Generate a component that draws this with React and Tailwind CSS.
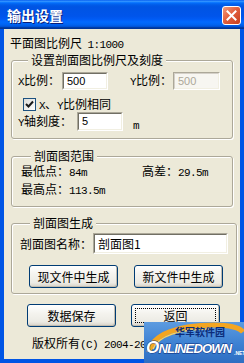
import React from 'react'

// latin runs in the old SimSun dialogs are half-width monospace
const L = ({ children }) => (
  <span className="font-['Liberation_Mono',monospace] text-[11px] tracking-[-0.6px]">{children}</span>
)

function Edit({ value, w, h, disabled }) {
  return (
    <div
      className={
        'border border-t-[#ACA899] border-l-[#ACA899] border-b-white border-r-white ' + w + ' ' + h
      }
    >
      <div
        className={
          'h-full border pl-[3px] flex items-center ' +
          (disabled
            ? 'bg-[#F7F6F1] border-t-[#D4D0C8] border-l-[#D4D0C8] border-b-[#F1EFE2] border-r-[#F1EFE2] text-[#ACA899]'
            : 'bg-white border-t-[#716F64] border-l-[#716F64] border-b-[#F1EFE2] border-r-[#F1EFE2] text-black')
        }
      >
        {value}
      </div>
    </div>
  )
}

function Btn({ children, focus }) {
  return (
    <div className="w-[89px] h-[23px] rounded-[3px] border border-[#003C74] bg-[linear-gradient(to_bottom,#FFFFFF_0%,#F4F3EE_40%,#ECEBE4_80%,#D6D0C5_100%)] shadow-[inset_-1px_-1px_0_#C1BCAF] flex items-center justify-center p-[3px]">
      <div
        className={
          'w-full h-full flex items-center justify-center leading-[14px] ' +
          (focus ? 'border border-dotted border-black' : '')
        }
      >
        {children}
      </div>
    </div>
  )
}

function Group({ title, className, children }) {
  return (
    <fieldset
      className={
        'border border-[#ACA899] rounded-[3px] shadow-[inset_1px_1px_0_#FFFFFF,1px_1px_0_#FFFFFF] ' + className
      }
    >
      <legend className="ml-[10px] px-[3px] leading-[14px] bg-[#ECE9D8]">{title}</legend>
      {children}
    </fieldset>
  )
}

export default function App() {
  return (
    <div className="w-[244px] h-[363px] overflow-hidden relative bg-[#0055E5] flex flex-col font-['Noto_Sans_CJK_SC',sans-serif] text-[12px] text-black">
      {/* title bar */}
      <div className="h-[29px] shrink-0 flex items-center justify-between pl-[7px] pr-[3px] bg-[linear-gradient(to_bottom,#0058EE_0%,#3593FF_4%,#288EFF_6%,#127DFF_8%,#036FFC_10%,#0262EE_14%,#0057E5_20%,#0054E3_24%,#0055EB_56%,#005BF5_66%,#026AFE_76%,#0062EF_86%,#0052D6_92%,#0040AB_94%,#003092_100%)]">
        <span className="text-white font-bold text-[14px] leading-none [text-shadow:1px_1px_0_#0A1E7A]">输出设置</span>
        <div className="w-[19px] h-[19px] mt-[1px] rounded-[3px] border border-white bg-[linear-gradient(135deg,#F29C7E_0%,#E2603F_45%,#C83E1C_100%)] flex items-center justify-center">
          <svg width="11" height="11" viewBox="0 0 11 11">
            <path d="M1.5 1.5 L9.5 9.5 M9.5 1.5 L1.5 9.5" stroke="#FFFFFF" strokeWidth="2" strokeLinecap="square" />
          </svg>
        </div>
      </div>

      {/* client */}
      <div className="flex-1 mx-[4px] mb-[4px] bg-[#ECE9D8] flex flex-col px-[7px] relative">
        <div className="mt-[7px] ml-[-1px] leading-[14px]">
          平面图比例尺&nbsp;&nbsp;<L>1:1000</L>
        </div>

        <Group title="设置剖面图比例尺及刻度" className="mt-[1px] px-[6px] pb-[7px]">
          <div className="mt-[5px] flex items-center h-[18px]">
            <span className="w-[44px] leading-[14px]"><L>X</L>比例：</span>
            <Edit value={<span className="font-['Liberation_Sans',sans-serif] text-[11px]">500</span>} w="w-[46px]" h="h-[18px]" />
            <span className="ml-[22px] w-[43px] leading-[14px]"><L>Y</L>比例：</span>
            <Edit value={<span className="font-['Liberation_Sans',sans-serif] text-[11px]">500</span>} w="w-[47px]" h="h-[18px]" disabled />
          </div>
          <div className="mt-[8px] flex items-center h-[13px] pl-[5px]">
            <div className="w-[13px] h-[13px] border border-[#1C5180] bg-[linear-gradient(135deg,#DCDCD7,#FFFFFF)] flex items-center justify-center">
              <svg width="9" height="9" viewBox="0 0 9 9">
                <path d="M1 4 L3.5 6.5 L8 1.5" stroke="#1A1A1A" strokeWidth="2" fill="none" />
              </svg>
            </div>
            <span className="ml-[3px] leading-[14px]"><L>X</L>、<L>Y</L>比例相同</span>
          </div>
          <div className="mt-[1px] flex items-center h-[19px]">
            <span className="w-[59px] leading-[14px]"><L>Y</L>轴刻度：</span>
            <Edit value={<span className="font-['Liberation_Sans',sans-serif] text-[11px]">5</span>} w="w-[46px]" h="h-[19px]" />
            <span className="ml-[10px] mt-[6px] leading-[14px]"><L>m</L></span>
          </div>
        </Group>

        <Group title="剖面图范围" className="mt-[10px] px-[9px] pb-[7px]">
          <div className="flex leading-[15px]">
            <span className="w-[121px]">最低点：<L>84m</L></span>
            <span>高差：<L>29.5m</L></span>
          </div>
          <div className="leading-[15px]">最高点：<L>113.5m</L></div>
        </Group>

        <Group title="剖面图生成" className="mt-[9px] px-[8px] pb-[5px]">
          <div className="mt-[3px] flex items-center h-[21px]">
            <span className="w-[73px] leading-[14px]">剖面图名称：</span>
            <Edit value="剖面图1" w="w-[135px]" h="h-[21px]" />
          </div>
          <div className="mt-[11px] flex gap-[16px] pl-[9px]">
            <Btn>现文件中生成</Btn>
            <Btn>新文件中生成</Btn>
          </div>
        </Group>

        <div className="mt-[10px] flex gap-[15px] pl-[16px]">
          <Btn>数据保存</Btn>
          <Btn focus>返回</Btn>
        </div>

        <div className="mt-[9px] pl-[21px] leading-[14px] whitespace-nowrap">
          版权所有<L>(C) 2004-20</L>
        </div>

        {/* download site watermark */}
        <div className="absolute right-[-4px] bottom-[-4px] w-[100px] h-[41px] overflow-hidden bg-[linear-gradient(to_bottom,#5C9BE0_0%,#3C80D2_55%,#2E6EC2_100%)]">
          <svg className="absolute left-0 top-0" width="100" height="41" viewBox="0 0 100 41">
            <path d="M5 30 C 8 12, 35 3, 70 3 C 86 3, 96 6, 99 10" stroke="#F3A521" strokeWidth="5" fill="none" />
            <path d="M9 27 C 14 14, 36 7, 66 7" stroke="#FFD25A" strokeWidth="1.5" fill="none" />
          </svg>
          <div className="absolute left-[31px] top-[4px] text-[10px] font-bold leading-[12px] text-[#0B2C7A]">华军软件园</div>
          <div className="absolute left-[2px] top-[18px] font-['Liberation_Sans',sans-serif] italic font-black text-[13px] leading-[16px] tracking-[-0.8px] text-white [-webkit-text-stroke:0.8px_#0B2C7A] [paint-order:stroke_fill] whitespace-nowrap">
            <span className="text-[17px]">O</span>NLINEDOWN
          </div>
          <div className="absolute left-[90px] top-[28px] font-['Liberation_Sans',sans-serif] font-bold text-[5px] leading-[6px] text-white">.NET</div>
        </div>
      </div>
    </div>
  )
}
